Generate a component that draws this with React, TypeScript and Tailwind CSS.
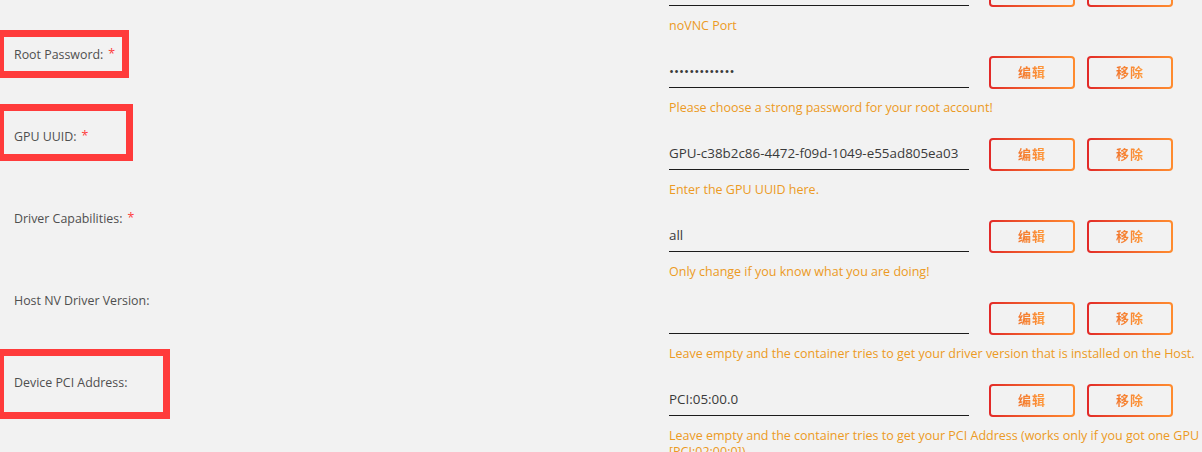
import React from "react";

type Row = {
  label: string;
  required?: boolean;
  value: string;
  password?: boolean;
  hint: React.ReactNode;
};

const rows: Row[] = [
  { label: "", value: "", hint: "noVNC Port" },
  {
    label: "Root Password:",
    required: true,
    value: "secretpasswd1",
    password: true,
    hint: "Please choose a strong password for your root account!",
  },
  {
    label: "GPU UUID:",
    required: true,
    value: "GPU-c38b2c86-4472-f09d-1049-e55ad805ea03",
    hint: "Enter the GPU UUID here.",
  },
  {
    label: "Driver Capabilities:",
    required: true,
    value: "all",
    hint: "Only change if you know what you are doing!",
  },
  {
    label: "Host NV Driver Version:",
    value: "",
    hint: "Leave empty and the container tries to get your driver version that is installed on the Host.",
  },
  {
    label: "Device PCI Address:",
    value: "PCI:05:00.0",
    hint: (
      <>
        Leave empty and the container tries to get your PCI Address (works only if you got one GPU installed)
        <br />
        [PCI:02:00:0])
      </>
    ),
  },
];

function GradientButton({ children }: { children: React.ReactNode }) {
  return (
    <button className="h-[33px] w-[86px] rounded-[4px] bg-gradient-to-r from-[#e22828] to-[#ff8c2f] p-[2px]">
      <span className="flex h-full w-full items-center justify-center rounded-[2px] bg-[#f2f2f2]">
        <span className="bg-gradient-to-r from-[#f2762c] to-[#ff9a3c] bg-clip-text text-[13px] font-bold tracking-[1px] text-transparent">
          {children}
        </span>
      </span>
    </button>
  );
}

function FormRow({ row }: { row: Row }) {
  return (
    <div className="flex h-[82px]">
      <div className="w-[669px] shrink-0 pl-[14px] pt-[1px] text-[12.4px] leading-[16px] text-[#4f4f4f]">
        {row.label}
        {row.required && <span className="relative -top-[1px] ml-[5px] text-[#ff3c3c]">*</span>}
      </div>
      <div className="flex flex-col pt-[9px]">
        <div className="flex items-start">
          <input
            readOnly
            type={row.password ? "password" : "text"}
            value={row.value}
            className="h-[33px] w-[300px] border-b border-[#1c1c1c] bg-transparent pb-[1px] text-[13.4px] text-[#3a3a3a] outline-none"
          />
          <div className="ml-[20px] flex gap-[12px] pt-[1px]">
            <GradientButton>编辑</GradientButton>
            <GradientButton>移除</GradientButton>
          </div>
        </div>
        <div className="mt-[11px] whitespace-nowrap text-[12.5px] leading-[16px] text-[#ec9a24]">{row.hint}</div>
      </div>
    </div>
  );
}

export default function App() {
  return (
    <div
      className="relative h-[452px] w-[1202px] overflow-hidden bg-[#f2f2f2]"
      style={{ fontFamily: '"Open Sans", "Noto Sans CJK SC", sans-serif' }}
    >
      <div className="-mt-[36px]">
        {rows.map((r, i) => (
          <FormRow key={i} row={r} />
        ))}
      </div>

      {/* annotation boxes */}
      <div className="absolute left-[-3px] top-[30px] h-[48px] w-[132px] border-[7px] border-[#ff3b3b]" />
      <div className="absolute left-[-3px] top-[104px] h-[57px] w-[136px] border-[7px] border-[#ff3b3b]" />
      <div className="absolute left-[-3px] top-[349px] h-[70px] w-[173px] border-[7px] border-[#ff3b3b]" />
    </div>
  );
}
